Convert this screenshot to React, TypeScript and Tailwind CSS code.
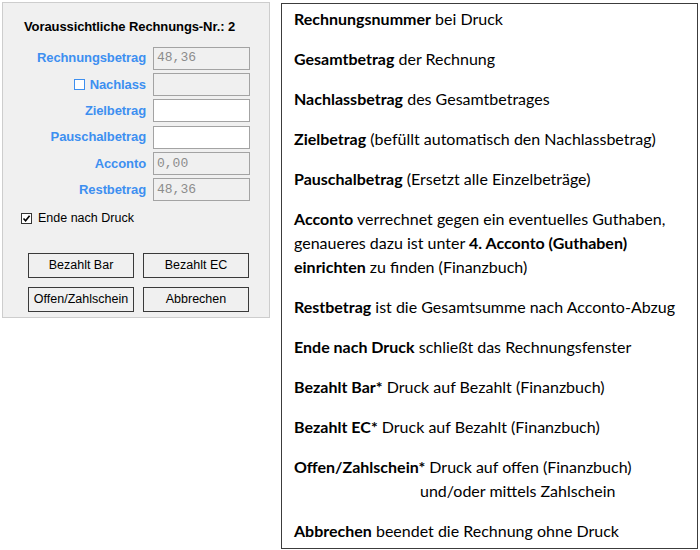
import React from "react";

const fields = [
  { label: "Rechnungsbetrag", value: "48,36", editable: false },
  { label: "Nachlass", value: "", editable: false, check: true },
  { label: "Zielbetrag", value: "", editable: true },
  { label: "Pauschalbetrag", value: "", editable: true },
  { label: "Acconto", value: "0,00", editable: false },
  { label: "Restbetrag", value: "48,36", editable: false },
];

function Field({ label, value, editable, check }: { label: string; value: string; editable: boolean; check?: boolean }) {
  return (
    <div className="flex h-[23px] items-center">
      <div className="flex w-[143px] items-center justify-end gap-[5px] text-[13px] font-bold tracking-[-0.1px] text-[#3d8ff0]">
        {check && <span className="inline-block h-[11px] w-[11px] border border-[#3d8ff0] bg-white" />}
        <span>{label}</span>
      </div>
      <div
        className={
          "ml-[7px] flex h-[23px] w-[97px] items-center border border-[#a3a3a3] pl-[3px] font-['Liberation_Mono',monospace] text-[13px] text-[#8c8c8c] " +
          (editable ? "bg-white" : "bg-[#f0f0f0]")
        }
      >
        {value}
      </div>
    </div>
  );
}

function WinButton({ children }: { children: React.ReactNode }) {
  return (
    <button className="flex h-[25px] w-[106px] items-center justify-center border border-[#3a3a3a] bg-[#f0f0f0] text-[12.5px] text-black">
      {children}
    </button>
  );
}

function InvoiceDialog() {
  return (
    <div className="ml-[2px] mt-[2px] h-[316px] w-[268px] border border-[#cdcdcd] bg-[#f0f0f0] font-['Liberation_Sans',Arial,sans-serif]">
      <div className="ml-[21px] mt-[14px] text-[13px] font-bold tracking-[-0.1px] text-black">
        Voraussichtliche Rechnungs-Nr.: 2
      </div>
      <div className="mt-[10px] flex flex-col gap-[3.4px]">
        {fields.map((f) => (
          <Field key={f.label} {...f} />
        ))}
      </div>
      <label className="ml-[18px] mt-[8px] flex items-center gap-[6px] text-[12.5px] text-black">
        <span className="flex h-[11px] w-[11px] items-center justify-center border border-[#333] bg-white">
          <svg width="9" height="9" viewBox="0 0 9 9">
            <path d="M1.5 4.5 L3.6 6.8 L7.6 1.8" fill="none" stroke="#000" strokeWidth="1.6" />
          </svg>
        </span>
        Ende nach Druck
      </label>
      <div className="ml-[25px] mt-[25px] grid w-[222px] grid-cols-2 gap-x-[8px] gap-y-[9px]">
        <WinButton>Bezahlt Bar</WinButton>
        <WinButton>Bezahlt EC</WinButton>
        <WinButton>Offen/Zahlschein</WinButton>
        <WinButton>Abbrechen</WinButton>
      </div>
    </div>
  );
}

function Legend() {
  return (
    <div className="ml-[11px] mt-[3px] flex h-[546px] w-[417px] flex-col gap-[16px] border border-[#3c3c3c] bg-white pl-[12px] pt-[3px] font-['Lato','Liberation_Sans',sans-serif] text-[16px] leading-[24px] text-black">
      <p><b>Rechnungsnummer</b> bei Druck</p>
      <p><b>Gesamtbetrag</b> der Rechnung</p>
      <p><b>Nachlassbetrag</b> des Gesamtbetrages</p>
      <p><b>Zielbetrag</b> (befüllt automatisch den Nachlassbetrag)</p>
      <p><b>Pauschalbetrag</b> (Ersetzt alle Einzelbeträge)</p>
      <p>
        <b>Acconto</b> verrechnet gegen ein eventuelles Guthaben,
        <br />
        genaueres dazu ist unter <b>4. Acconto (Guthaben)</b>
        <br />
        <b>einrichten</b> zu finden (Finanzbuch)
      </p>
      <p><b>Restbetrag</b> ist die Gesamtsumme nach Acconto-Abzug</p>
      <p><b>Ende nach Druck</b> schließt das Rechnungsfenster</p>
      <p><b>Bezahlt Bar*</b> Druck auf Bezahlt (Finanzbuch)</p>
      <p><b>Bezahlt EC*</b> Druck auf Bezahlt (Finanzbuch)</p>
      <p>
        <b>Offen/Zahlschein*</b> Druck auf offen (Finanzbuch)
        <br />
        <span className="pl-[126px]">und/oder mittels Zahlschein</span>
      </p>
      <p><b>Abbrechen</b> beendet die Rechnung ohne Druck</p>
    </div>
  );
}

export default function App() {
  return (
    <div className="flex h-[550px] w-[700px] items-start bg-white">
      <InvoiceDialog />
      <Legend />
    </div>
  );
}
